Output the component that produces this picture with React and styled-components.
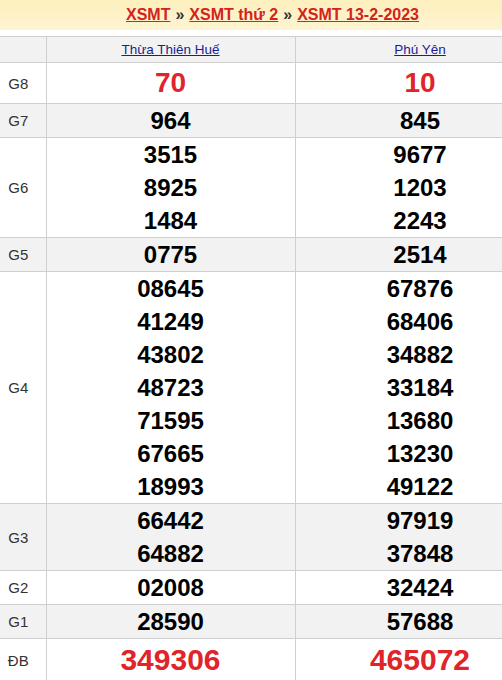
import React from 'react';
import styled, { createGlobalStyle } from 'styled-components';

const colors = {
  red: '#e1232a',
  link: '#d2231c',
  province: '#1c1c94',
  border: '#cfcfcf',
  stripe: '#f2f2f2',
};

const GlobalStyle = createGlobalStyle`
  body {
    margin: 0;
    font-family: "Liberation Sans", Arial, sans-serif;
    background: #fff;
  }
`;

const Viewport = styled.div`
  width: 100%;
  overflow: hidden;
`;

const Page = styled.div`
  width: 545px;
`;

const Breadcrumb = styled.div`
  height: 30px;
  background: linear-gradient(#fdf0bd, #fdf4d2);
  display: flex;
  align-items: center;
  justify-content: center;
  gap: 5px;
  font-size: 16px;
  font-weight: bold;
  color: #333;
  margin-bottom: 6px;
`;

const Crumb = styled.a`
  color: ${colors.link};
  text-decoration: underline;
`;

const Table = styled.table`
  border-collapse: collapse;
  width: 545px;
  table-layout: fixed;
`;

const Row = styled.tr`
  background: ${({ striped }) => (striped ? colors.stripe : '#fff')};
`;

const Label = styled.td`
  width: 46px;
  box-sizing: border-box;
  border: 1px solid ${colors.border};
  border-left: none;
  padding: 0 9px 0 0;
  text-align: center;
  font-size: 15px;
  color: #333;
`;

const HeadCell = styled.td`
  border: 1px solid ${colors.border};
  height: 25px;
  padding: 0;
  text-align: center;
  font-size: 13.5px;
`;

const Province = styled.a`
  color: ${colors.province};
  text-decoration: underline;
`;

const Cell = styled.td`
  border: 1px solid ${colors.border};
  padding: 0;
  text-align: center;
  vertical-align: middle;
`;

const Number = styled.div`
  font-weight: bold;
  font-size: ${({ size }) => size}px;
  line-height: ${({ lh }) => lh}px;
  color: ${({ red }) => (red ? colors.red : '#000')};
`;

const prizes = [
  { label: 'G8', a: ['70'], b: ['10'], size: 28, lh: 40, red: true },
  { label: 'G7', a: ['964'], b: ['845'], striped: true },
  { label: 'G6', a: ['3515', '8925', '1484'], b: ['9677', '1203', '2243'] },
  { label: 'G5', a: ['0775'], b: ['2514'], striped: true },
  {
    label: 'G4',
    a: ['08645', '41249', '43802', '48723', '71595', '67665', '18993'],
    b: ['67876', '68406', '34882', '33184', '13680', '13230', '49122'],
  },
  { label: 'G3', a: ['66442', '64882'], b: ['97919', '37848'], striped: true },
  { label: 'G2', a: ['02008'], b: ['32424'] },
  { label: 'G1', a: ['28590'], b: ['57688'], striped: true },
  { label: 'ĐB', a: ['349306'], b: ['465072'], size: 30, lh: 42, red: true },
];

export default function App() {
  return (
    <Viewport>
      <GlobalStyle />
      <Page>
        <Breadcrumb>
          <Crumb>XSMT</Crumb>
          <span>»</span>
          <Crumb>XSMT thứ 2</Crumb>
          <span>»</span>
          <Crumb>XSMT 13-2-2023</Crumb>
        </Breadcrumb>
        <Table>
          <colgroup>
            <col style={{ width: 46 }} />
            <col style={{ width: 249 }} />
            <col style={{ width: 250 }} />
          </colgroup>
          <tbody>
            <Row striped>
              <Label />
              <HeadCell><Province>Thừa Thiên Huế</Province></HeadCell>
              <HeadCell><Province>Phú Yên</Province></HeadCell>
            </Row>
            {prizes.map(p => (
              <Row key={p.label} striped={p.striped}>
                <Label>{p.label}</Label>
                {[p.a, p.b].map((nums, i) => (
                  <Cell key={i}>
                    {nums.map(n => (
                      <Number key={n} size={p.size || 24} lh={p.lh || 33} red={p.red}>{n}</Number>
                    ))}
                  </Cell>
                ))}
              </Row>
            ))}
          </tbody>
        </Table>
      </Page>
    </Viewport>
  );
}
